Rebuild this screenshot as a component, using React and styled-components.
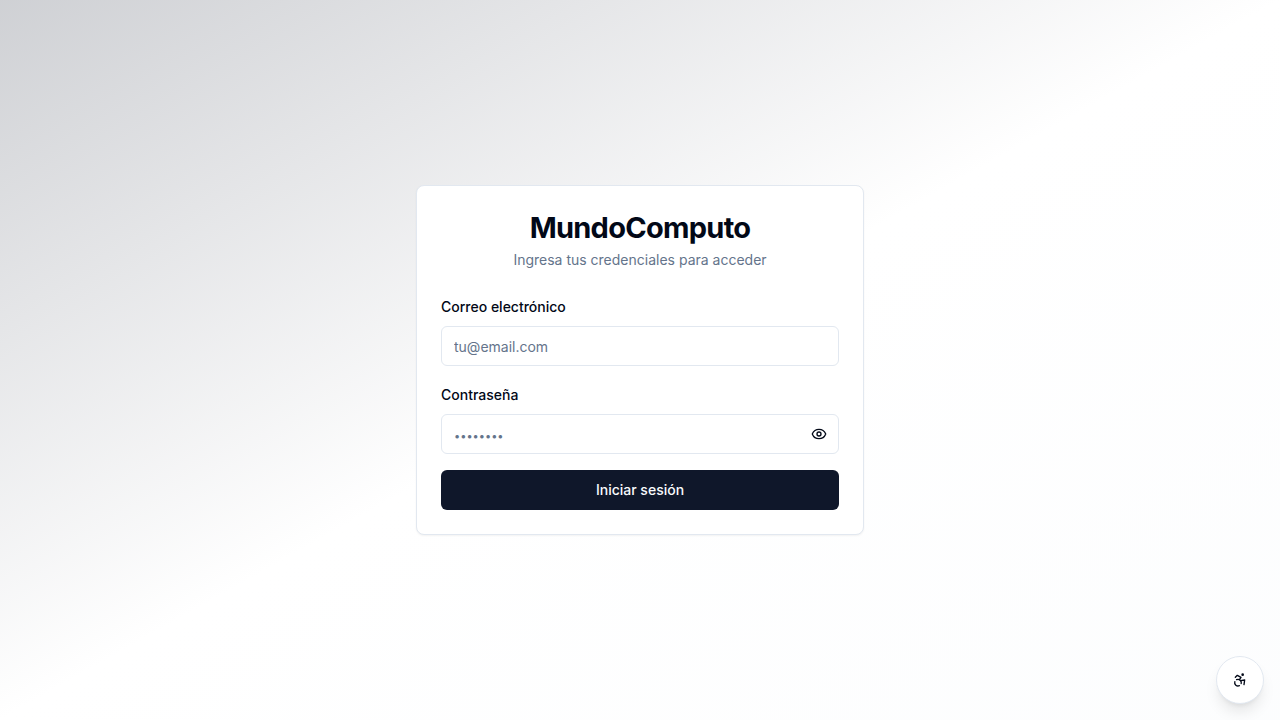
import React, { useState } from "react";
import styled, { createGlobalStyle } from "styled-components";
import { Accessibility, Eye, EyeOff } from "lucide-react";

const GlobalStyle = createGlobalStyle`
  *, *::before, *::after { box-sizing: border-box; }
  body {
    margin: 0;
    color: #020817;
    font-family: Inter, "Liberation Sans", sans-serif;
    font-size: 16px;
    line-height: 24px;
  }
  h1, p { margin: 0; }
  button, input { font: inherit; color: inherit; }
`;

const Page = styled.main`
  display: flex;
  align-items: center;
  justify-content: center;
  min-height: 100vh;
  padding: 16px;
  background: linear-gradient(to bottom right, rgba(15, 23, 42, 0.2), #ffffff, rgba(241, 245, 249, 0.2));
`;

const Card = styled.section`
  width: 100%;
  max-width: 448px;
  border: 1px solid #e2e8f0;
  border-radius: 8px;
  background: #ffffff;
  box-shadow: 0 1px 2px rgba(0, 0, 0, 0.05);
`;

const CardHeader = styled.header`
  display: flex;
  flex-direction: column;
  gap: 4px;
  padding: 24px;
  text-align: center;
`;

const Title = styled.h1`
  font-size: 29px;
  line-height: 36px;
  font-weight: 700;
  letter-spacing: -0.025em;
`;

const Subtitle = styled.p`
  color: #64748b;
  font-size: 14px;
  line-height: 20px;
`;

const Form = styled.form`
  display: flex;
  flex-direction: column;
  gap: 16px;
  padding: 0 24px 24px;
`;

const Field = styled.div`
  display: flex;
  flex-direction: column;
  gap: 6px;
`;

const Label = styled.label`
  font-size: 14px;
  line-height: 26px;
  font-weight: 500;
`;

const InputWrap = styled.div`
  position: relative;
  display: flex;
`;

const Input = styled.input`
  width: 100%;
  height: 40px;
  padding: 8px ${(p) => (p.$withToggle ? "40px" : "12px")} 8px 12px;
  border: 1px solid #e2e8f0;
  border-radius: 6px;
  background: #ffffff;
  font-size: 14px;
  line-height: 20px;
  &::placeholder {
    color: #64748b;
    font-size: ${(p) => (p.$withToggle ? "11px" : "14px")};
    opacity: 1;
  }
`;

const ToggleButton = styled.button`
  position: absolute;
  top: 0;
  right: 0;
  display: flex;
  align-items: center;
  height: 100%;
  padding: 0 12px;
  border: 0;
  background: transparent;
  cursor: pointer;
`;

const SubmitButton = styled.button`
  height: 40px;
  border: 0;
  border-radius: 6px;
  background: #0f172a;
  color: #f8fafc;
  font-size: 14px;
  line-height: 20px;
  font-weight: 500;
  cursor: pointer;
`;

const AccessButton = styled.button`
  position: fixed;
  right: 16px;
  bottom: 16px;
  display: flex;
  align-items: center;
  justify-content: center;
  width: 48px;
  height: 48px;
  padding: 0;
  border: 1px solid #e2e8f0;
  border-radius: 50%;
  background: #ffffff;
  box-shadow: 0 10px 15px -3px rgba(0, 0, 0, 0.1), 0 4px 6px -4px rgba(0, 0, 0, 0.1);
  cursor: pointer;
`;

export default function App() {
  const [visible, setVisible] = useState(false);

  return (
    <>
      <GlobalStyle />
      <Page>
        <Card>
          <CardHeader>
            <Title>MundoComputo</Title>
            <Subtitle>Ingresa tus credenciales para acceder</Subtitle>
          </CardHeader>
          <Form onSubmit={(e) => e.preventDefault()}>
            <Field>
              <Label htmlFor="email">Correo electrónico</Label>
              <Input id="email" type="email" placeholder="tu@email.com" />
            </Field>
            <Field>
              <Label htmlFor="password">Contraseña</Label>
              <InputWrap>
                <Input id="password" type={visible ? "text" : "password"} placeholder="••••••••" $withToggle />
                <ToggleButton
                  type="button"
                  aria-label={visible ? "Ocultar contraseña" : "Mostrar contraseña"}
                  onClick={() => setVisible(!visible)}
                >
                  {visible ? <EyeOff size={16} /> : <Eye size={16} />}
                </ToggleButton>
              </InputWrap>
            </Field>
            <SubmitButton type="submit">Iniciar sesión</SubmitButton>
          </Form>
        </Card>
      </Page>
      <AccessButton type="button" aria-label="Accesibilidad">
        <Accessibility size={16} />
      </AccessButton>
    </>
  );
}
